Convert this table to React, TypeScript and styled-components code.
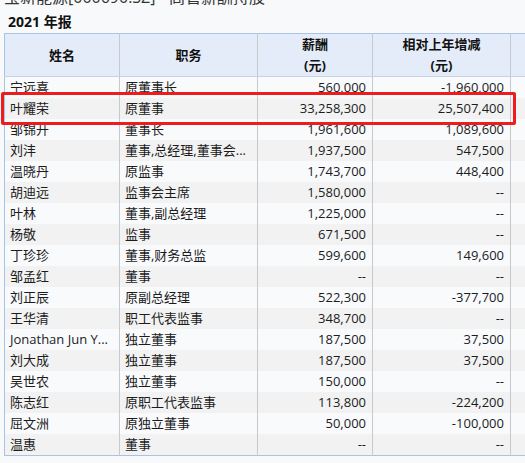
import React from "react";
import styled, { createGlobalStyle } from "styled-components";

const Global = createGlobalStyle`
  html, body { margin: 0; padding: 0; overflow: hidden; background: #f8f9fb; }
  body { font-family: "Open Sans", "Noto Sans CJK SC", sans-serif; color: #222; }
`;

const Page = styled.div`
  position: relative;
  width: 525px;
  height: 463px;
  overflow: hidden;
  padding: 0 0 0 4px;
  box-sizing: border-box;
`;

const Title = styled.div`
  margin-top: -14px;
  height: 22px;
  font-size: 16px;
  line-height: 22px;
  color: #333;
  white-space: nowrap;
  overflow: hidden;
`;

const Subtitle = styled.div`
  padding-left: 4px;
  margin-top: 6px;
  height: 16px;
  font-size: 14px;
  font-weight: 700;
  line-height: 16px;
  color: #111;
`;

const Table = styled.table`
  margin-top: 3px;
  border-collapse: collapse;
  table-layout: fixed;
  width: 540px;
  font-size: 13px;
  border-left: 1px solid #a9c3e6;
  border-top: 1px solid #a9c3e6;
  border-bottom: 1px solid #a9c3e6;
`;

const HeadCell = styled.th`
  background: #e3ecf8;
  font-weight: 700;
  text-align: center;
  height: 42px;
  padding: 0;
  line-height: 21px;
  color: #111;
  border-right: 1px solid #c6c9ce;
  border-bottom: 1px solid #c6d3e6;
`;

const Row = styled.tr<{ $alt: boolean }>`
  background: ${(p) => (p.$alt ? "#f2f2f2" : "#f9fafc")};
`;

const Cell = styled.td<{ $num?: boolean }>`
  height: 21px;
  padding: 0 ${(p) => (p.$num ? "6px" : "4px")} 0 ${(p) => (p.$num ? "4px" : "5px")};
  line-height: 21px;
  text-align: ${(p) => (p.$num ? "right" : "left")};
  white-space: nowrap;
  overflow: hidden;
  border-right: 1px solid #c6c9ce;
  color: #1c1c1c;
`;

const Highlight = styled.div`
  position: absolute;
  left: 1px;
  top: 92px;
  width: 515px;
  height: 33px;
  box-sizing: border-box;
  border: 3px solid #ee1c1c;
  border-radius: 2px;
  pointer-events: none;
`;

const rows: [string, string, string, string][] = [
  ["宁远喜", "原董事长", "560,000", "-1,960,000"],
  ["叶耀荣", "原董事", "33,258,300", "25,507,400"],
  ["邹锦开", "董事长", "1,961,600", "1,089,600"],
  ["刘沣", "董事,总经理,董事会...", "1,937,500", "547,500"],
  ["温晓丹", "原监事", "1,743,700", "448,400"],
  ["胡迪远", "监事会主席", "1,580,000", "--"],
  ["叶林", "董事,副总经理", "1,225,000", "--"],
  ["杨敬", "监事", "671,500", "--"],
  ["丁珍珍", "董事,财务总监", "599,600", "149,600"],
  ["邹孟红", "董事", "--", "--"],
  ["刘正辰", "原副总经理", "522,300", "-377,700"],
  ["王华清", "职工代表监事", "348,700", "--"],
  ["Jonathan Jun Y...", "独立董事", "187,500", "37,500"],
  ["刘大成", "独立董事", "187,500", "37,500"],
  ["吴世农", "独立董事", "150,000", "--"],
  ["陈志红", "原职工代表监事", "113,800", "-224,200"],
  ["屈文洲", "原独立董事", "50,000", "-100,000"],
  ["温惠", "董事", "--", "--"],
];

export default function App() {
  return (
    <>
      <Global />
      <Page>
        <Title>宝新能源[000690.SZ] - 高管薪酬持股</Title>
        <Subtitle>2021 年报</Subtitle>
        <Table>
          <colgroup>
            <col style={{ width: 115 }} />
            <col style={{ width: 138 }} />
            <col style={{ width: 115 }} />
            <col style={{ width: 138 }} />
            <col />
          </colgroup>
          <thead>
            <tr>
              <HeadCell>姓名</HeadCell>
              <HeadCell>职务</HeadCell>
              <HeadCell>
                薪酬
                <br />
                (元)
              </HeadCell>
              <HeadCell>
                相对上年增减
                <br />
                (元)
              </HeadCell>
              <HeadCell />
            </tr>
          </thead>
          <tbody>
            {rows.map((r, i) => (
              <Row key={i} $alt={i % 2 === 1}>
                <Cell>{r[0]}</Cell>
                <Cell>{r[1]}</Cell>
                <Cell $num>{r[2]}</Cell>
                <Cell $num>{r[3]}</Cell>
                <Cell />
              </Row>
            ))}
          </tbody>
        </Table>
        <Highlight />
      </Page>
    </>
  );
}
